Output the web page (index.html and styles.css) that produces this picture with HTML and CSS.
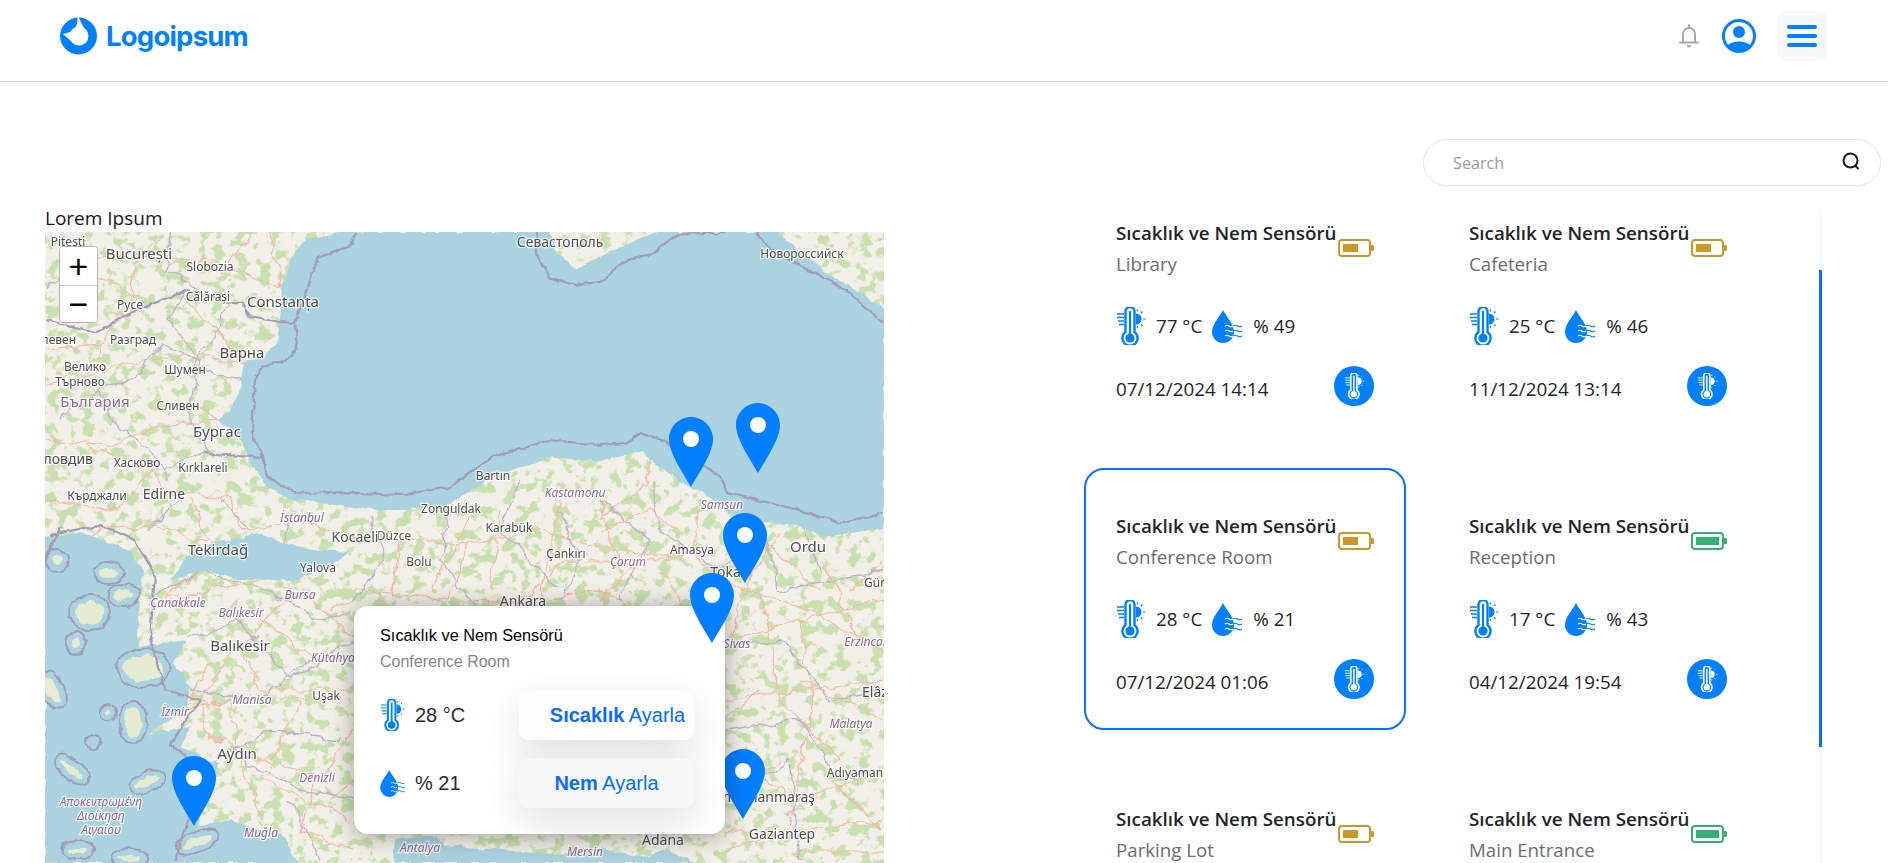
FILE: index.html
```html
<!DOCTYPE html>
<html lang="tr">
<head>
  <meta charset="UTF-8">
  <meta name="viewport" content="width=device-width, initial-scale=1.0">
  <title>Logoipsum</title>
  <link rel="stylesheet" href="styles.css">
</head>
<body>
  <svg class="sprite" width="0" height="0">
    <symbol id="thermo" viewBox="0 0 30 38">
      <path d="M9.500 25V4.500a4.500 4.500 0 0 1 9 0V25a7.600 7.600 0 1 1-9 0Z" fill="none" stroke="currentColor" stroke-width="2.400"/>
      <circle cx="14" cy="31" r="4.600" fill="currentColor"/>
      <path d="M14 4v24" stroke="currentColor" stroke-width="2.200"/>
      <path d="M1 7h7M1 10.500h7M2 14h6M3 17.500h5" stroke="currentColor" stroke-width="1.300"/>
      <path d="M20 6.500a5.500 5.500 0 0 1 0 11Z" fill="currentColor"/>
      <path d="M21 2.500l.6 1.800M26.500 4.500l-1.500 1.500M29.500 12h-2.500M26.500 19l-1.500-1.500M21 21l.6-1.800" stroke="currentColor" stroke-width="1.200"/>
    </symbol>
    <symbol id="drop" viewBox="0 0 30 33">
      <path d="M11 0C14 6.500 22 14 22 22A11 11 0 0 1 0 22C0 14 8 6.500 11 0Z" fill="currentColor"/>
      <g fill="none" stroke-width="1.100">
        <path class="wave-in" d="M13 16q2-1.600 4 0t4 0M13 21q2-1.600 4 0t4 0M13 26q2-1.600 4 0t4 0"/>
        <path d="M21 16q2-1.600 4.500 0t4.500 0M21 21q2-1.600 4.500 0t4.500 0M21 26q2-1.600 4.500 0t4.500 0" stroke="currentColor"/>
      </g>
    </symbol>
    <symbol id="pin" viewBox="0 0 44 70">
      <path d="M22 0C34 0 44 10 44 22C44 36 30 56 22 70C14 56 0 36 0 22C0 10 10 0 22 0Z" fill="#007fff"/>
      <circle cx="22" cy="22" r="8" fill="#fff"/>
    </symbol>
    <symbol id="battery" viewBox="0 0 36 18">
      <rect x="1" y="1" width="31" height="16" rx="3" fill="none" stroke="currentColor" stroke-width="2"/>
      <path d="M33 6h1.500a1.500 1.500 0 0 1 1.500 1.500v3a1.500 1.500 0 0 1-1.500 1.500H33Z" fill="currentColor"/>
    </symbol>
  </svg>

  <header class="topbar">
    <a class="logo" href="#">
      <svg class="logo-mark" viewBox="0 0 37 38">
        <circle cx="18.500" cy="19" r="18.500" fill="#007fff"/>
        <circle cx="19" cy="19" r="9.500" fill="#fff"/>
        <path d="M17.500 0C18 9 15 15 3 17L12 25L25 13L18.500 0Z" fill="#fff"/>
      </svg>
      <span class="logo-text">Logoipsum</span>
    </a>
    <div class="topbar-actions">
      <svg class="bell" viewBox="0 0 20 24">
        <path d="M10 1v2M4 18V10a6 6 0 0 1 12 0v8M1 18.500h18" fill="none" stroke="#aaa" stroke-width="2" stroke-linecap="round"/>
        <path d="M8 21.500h4l-2 1.800Z" fill="#aaa" stroke="#aaa"/>
      </svg>
      <svg class="user" viewBox="0 0 34 34">
        <circle cx="17" cy="17" r="15.500" fill="#fff" stroke="#007fff" stroke-width="3"/>
        <circle cx="17" cy="13" r="6" fill="#007fff"/>
        <path d="M5 27C10 21 24 21 29 27C25 34 9 34 5 27Z" fill="#007fff"/>
      </svg>
      <button class="menu-btn" aria-label="Menu"><span></span><span></span><span></span></button>
    </div>
  </header>

  <main class="page">
    <section class="map-col">
      <h2 class="map-title">Lorem Ipsum</h2>
      <div class="map">
        <svg class="map-tiles" viewBox="45 232 839 631">
          <defs>
            <filter id="greens" x="0" y="0" width="100%" height="100%" color-interpolation-filters="sRGB">
              <feTurbulence type="fractalNoise" baseFrequency="0.085" numOctaves="4" seed="11"/>
              <feColorMatrix type="matrix" values="0 0 0 0 0.79  0 0 0 0 0.88  0 0 0 0 0.69  9 0 0 0 -4.700"/>
            </filter>
            <filter id="wiggle" filterUnits="userSpaceOnUse" x="0" y="190" width="930" height="720">
              <feTurbulence type="fractalNoise" baseFrequency="0.05" numOctaves="3" seed="4" result="n"/>
              <feDisplacementMap in="SourceGraphic" in2="n" scale="14" xChannelSelector="R" yChannelSelector="G"/>
            </filter>
            <filter id="wiggle-fine" filterUnits="userSpaceOnUse" x="0" y="190" width="930" height="720">
              <feTurbulence type="fractalNoise" baseFrequency="0.09" numOctaves="3" seed="7" result="n"/>
              <feDisplacementMap in="SourceGraphic" in2="n" scale="6" xChannelSelector="R" yChannelSelector="G"/>
            </filter>
            <g id="isles">
              <ellipse cx="108" cy="573" rx="9" ry="5"/>
              <ellipse cx="123" cy="595" rx="10" ry="5"/>
              <ellipse cx="90" cy="613" rx="14" ry="12"/>
              <ellipse cx="76" cy="643" rx="4" ry="6"/>
              <ellipse cx="143" cy="668" rx="21" ry="13"/>
              <ellipse cx="133" cy="722" rx="8" ry="15"/>
              <ellipse cx="108" cy="712" rx="2" ry="2"/>
              <ellipse cx="93" cy="742" rx="1" ry="1"/>
              <ellipse cx="57" cy="560" rx="6" ry="5"/>
              <ellipse cx="72" cy="770" rx="14" ry="4" transform="rotate(40 72 770)"/>
              <ellipse cx="147" cy="782" rx="13" ry="4" transform="rotate(-25 147 782)"/>
              <ellipse cx="197" cy="842" rx="16" ry="4" transform="rotate(-20 197 842)"/>
              <ellipse cx="52" cy="690" rx="6" ry="14" transform="rotate(-30 52 690)"/>
              <ellipse cx="78" cy="850" rx="10" ry="3"/>
              <ellipse cx="130" cy="858" rx="12" ry="3"/>
            </g>
          </defs>

          <rect x="45" y="232" width="839" height="631" fill="#f2efe8"/>
          <rect x="45" y="232" width="839" height="631" filter="url(#greens)"/>

          <g class="roads" filter="url(#wiggle)">
            <path d="M45 440L110 445L170 425L217 420M160 240L139 254L210 262L282 288M139 254L130 304M130 304L100 345L95 370L45 385M100 370L180 355L243 363"/>
            <path d="M85 445L150 470L167 490L230 500L240 530L300 520L355 537L425 540L470 545L530 530L590 545L640 555L692 555L745 590L810 610L884 650"/>
            <path d="M218 545L165 600L215 590L265 580L300 590L354 640M240 646L300 590M240 646L200 700L205 730L240 755L320 775L354 730M237 754L230 700L175 712M162 700L200 705"/>
            <path d="M725 640L800 620L884 600M725 700L884 680M725 760L800 800L884 770M725 830L780 835L884 820M800 620L810 700L790 830M760 590L780 700L840 760"/>
            <path d="M354 590L450 600L523 601L566 560L628 562L692 555M500 510L490 590M600 500L620 560M650 460L640 490L600 520M700 500L692 555M780 530L745 590L730 640"/>
            <path d="M240 755L262 820M320 775L300 830M240 646L262 690L330 690M45 540L150 525L218 545M190 500L210 540M140 254L60 262"/>
            <path d="M400 540L394 600M470 545L450 600M540 600L560 500M640 560L600 600M820 560L860 640L884 640M725 720L760 690M760 840L725 850"/>
            <path d="M70 270L120 285L130 304M230 262L250 232M282 288L270 232M185 300L215 330L243 363M45 350L100 345M190 400L217 420M150 470L120 510L45 500"/>
            <path d="M330 610L354 600M260 620L320 660L354 660M280 700L354 690M262 780L354 820M300 830L354 850M210 660L190 700M330 800L354 780M270 760L300 700"/>
            <path d="M430 590L470 520M550 600L600 590L640 610L725 600M660 570L680 600L725 620M600 530L650 510L680 530M760 540L820 590M850 590L884 560M800 680L884 720M725 790L780 760M830 780L884 830M800 850L884 850"/>
          </g>

          <g class="borders" filter="url(#wiggle)">
            <path d="M60 232L70 270L45 290M170 232L165 270L200 290M187 290L170 320L200 360L160 345L130 380L100 390L120 430M230 303L210 340L190 365L245 380M100 390L60 420M200 360L190 410L205 452"/>
            <path d="M120 430L150 450L170 480M205 452L160 470M180 500L150 530M220 500L250 530M290 520L280 560"/>
            <path d="M150 600L200 570L260 590L320 620L354 610M190 640L240 620L290 680L354 640M190 690L260 700L310 660M215 760L270 730L340 740M245 760L300 790L354 800M290 800L320 860"/>
            <path d="M370 510L385 560L354 600M450 500L440 560L480 610M520 480L500 530L560 590M560 510L580 560L560 600M600 500L650 540L620 600M650 480L660 530L720 570L760 530M760 530L780 590L884 570"/>
            <path d="M725 650L780 640L830 700L884 690M725 730L800 720L840 780L884 770M800 520L820 570M740 790L790 760L800 860"/>
          </g>

          <g filter="url(#wiggle-fine)">
            <path class="sea" d="M340 232L540 232L550 232L557 253L575 270L600 257L623 245L643 237L657 232L778 232L800 253L833 277L867 297L884 310L884 528L823 537L800 525L763 522L727 513L710 497L683 483L650 460L643 450L600 462L550 457L493 477L450 503L410 510L370 510L330 503L293 500L267 487L250 463L240 437L230 430L217 420L230 410L240 393L243 363L263 357L278 343L280 320L282 287L287 273L293 253L307 240Z"/>
            <path class="sea" d="M45 537L80 533L130 550L143 570L140 600L137 647L187 640L173 663L190 687L187 707L150 733L190 727L180 747L217 763L210 793L197 827L230 820L263 830L283 833L297 863L45 863Z"/>
            <path class="sea" d="M230 540L257 533L290 545L320 550L350 552L330 567L297 580L263 580L237 580L207 570L170 580L187 557L217 540Z"/>
            <path class="sea" d="M393 863L395 838L430 836L445 845L500 850L560 855L600 848L640 858L665 850L695 863Z"/>

            <g class="border-ring"><use href="#isles"/></g>
            <g class="border-gap"><use href="#isles"/></g>
            <g class="isle-land"><use href="#isles"/></g>

            <g class="country">
              <path d="M45 320L97 332L130 313L187 290L230 303L243 303L250 317L280 322L295 323"/>
              <path d="M357 232L350 247L317 258L295 323L297 337L293 357L263 367L255 380L252 433L263 457L267 477L297 493L340 492L400 495L450 487L493 457L550 440L600 445L627 443L640 433L667 443L697 460L720 477L727 493L770 503L810 513L840 523L884 512"/>
              <path d="M203 453L263 458"/>
              <path d="M536 232L536 253L550 277L573 286L600 283L623 262L653 253L670 240L683 234L730 232"/>
              <path d="M757 232L770 250L810 270L850 293L884 323"/>
              <path d="M60 528L45 560M50 535L100 525L135 540L155 575L150 640L165 690L200 700L170 745L205 770L190 815L175 860"/>
            </g>
          </g>

          <g class="labels">
            <text x="68" y="246" class="sm">Pitești</text>
            <text x="139" y="259" class="xl">București</text>
            <text x="210" y="271" class="sm">Slobozia</text>
            <text x="208" y="301" class="sm">Călărași</text>
            <text x="130" y="309" class="sm">Pyce</text>
            <text x="283" y="307" class="xl">Constanța</text>
            <text x="133" y="344" class="sm">Разград</text>
            <text x="76" y="344" class="sm end">Плевен</text>
            <text x="242" y="358" class="lg">Варна</text>
            <text x="85" y="371" class="sm">Велико</text>
            <text x="80" y="386" class="sm">Търново</text>
            <text x="185" y="374" class="sm">Шумен</text>
            <text x="95" y="407" class="region big">България</text>
            <text x="178" y="410" class="sm">Сливен</text>
            <text x="217" y="437" class="lg">Бургас</text>
            <text x="93" y="464" class="md end">Пловдив</text>
            <text x="137" y="467" class="sm">Хасково</text>
            <text x="203" y="472" class="sm">Kırklareli</text>
            <text x="97" y="500" class="sm">Кърджали</text>
            <text x="164" y="499" class="md">Edirne</text>
            <text x="560" y="247" class="md">Севастополь</text>
            <text x="802" y="258" class="sm">Новороссийск</text>
            <text x="493" y="480" class="sm">Bartın</text>
            <text x="451" y="513" class="sm">Zonguldak</text>
            <text x="575" y="497" class="region">Kastamonu</text>
            <text x="722" y="509" class="region">Samsun</text>
            <text x="509" y="532" class="sm">Karabük</text>
            <text x="566" y="558" class="sm">Çankırı</text>
            <text x="628" y="566" class="region">Çorum</text>
            <text x="692" y="554" class="sm">Amasya</text>
            <text x="728" y="577" class="md">Tokat</text>
            <text x="808" y="552" class="lg">Ordu</text>
            <text x="864" y="587" class="sm start">Gümüşhane</text>
            <text x="419" y="566" class="sm">Bolu</text>
            <text x="394" y="540" class="sm">Düzce</text>
            <text x="523" y="606" class="md">Ankara</text>
            <text x="355" y="542" class="md">Kocaeli</text>
            <text x="218" y="555" class="lg">Tekirdağ</text>
            <text x="302" y="522" class="region">İstanbul</text>
            <text x="318" y="572" class="sm">Yalova</text>
            <text x="300" y="599" class="region">Bursa</text>
            <text x="178" y="607" class="region">Çanakkale</text>
            <text x="241" y="617" class="region">Balıkesir</text>
            <text x="240" y="651" class="lg">Balıkesir</text>
            <text x="333" y="662" class="region">Kütahya</text>
            <text x="252" y="704" class="region">Manisa</text>
            <text x="326" y="700" class="sm">Uşak</text>
            <text x="175" y="716" class="region">İzmir</text>
            <text x="237" y="759" class="lg">Aydın</text>
            <text x="317" y="782" class="region">Denizli</text>
            <text x="261" y="837" class="region">Muğla</text>
            <text x="101" y="806" class="region">Αποκεντρωμένη</text>
            <text x="101" y="820" class="region">Διοίκηση</text>
            <text x="101" y="834" class="region">Αιγαίου</text>
            <text x="420" y="852" class="region">Antalya</text>
            <text x="585" y="856" class="region">Mersin</text>
            <text x="663" y="845" class="md">Adana</text>
            <text x="782" y="839" class="md">Gaziantep</text>
            <text x="815" y="802" class="md end">Kahramanmaraş</text>
            <text x="855" y="777" class="sm">Adıyaman</text>
            <text x="851" y="728" class="region">Malatya</text>
            <text x="862" y="697" class="md start">Elâzığ</text>
            <text x="737" y="648" class="region">Sivas</text>
            <text x="867" y="646" class="region">Erzincan</text>
          </g>
        </svg>

        <div class="zoom-ctl">
          <button class="zoom-btn">+</button>
          <button class="zoom-btn">−</button>
        </div>

        <svg class="pin pin-a"><use href="#pin"/></svg>
        <svg class="pin pin-b"><use href="#pin"/></svg>
        <svg class="pin pin-c"><use href="#pin"/></svg>
        <svg class="pin pin-e"><use href="#pin"/></svg>
        <svg class="pin pin-f"><use href="#pin"/></svg>

        <div class="popup">
          <div class="popup-title">Sıcaklık ve Nem Sensörü</div>
          <div class="popup-place">Conference Room</div>
          <div class="popup-row">
            <div class="popup-val">
              <svg class="popup-thermo"><use href="#thermo"/></svg>
              <span>28 °C</span>
            </div>
            <button class="popup-btn popup-btn-temp"><b>Sıcaklık</b> Ayarla</button>
          </div>
          <div class="popup-row">
            <div class="popup-val">
              <svg class="popup-drop"><use href="#drop"/></svg>
              <span>% 21</span>
            </div>
            <button class="popup-btn popup-btn-hum"><b>Nem</b> Ayarla</button>
          </div>
        </div>

        <svg class="pin pin-d"><use href="#pin"/></svg>
      </div>
    </section>

    <section class="side-col">
      <div class="search">
        <input class="search-input" type="text" placeholder="Search">
        <svg class="search-icon" viewBox="0 0 20 20">
          <circle cx="9.500" cy="9.500" r="7" fill="none" stroke="#1c1c1c" stroke-width="2"/>
          <path d="M14.500 15l2.500 2.500" stroke="#1c1c1c" stroke-width="2" stroke-linecap="round"/>
        </svg>
      </div>

      <div class="sensor-panel">
        <div class="scroll-track"><div class="scroll-thumb"></div></div>
        <div class="sensor-grid">

          <article class="card">
            <div class="card-head">
              <div>
                <div class="card-title">Sıcaklık ve Nem Sensörü</div>
                <div class="card-place">Library</div>
              </div>
              <div class="batt batt-mid"><svg><use href="#battery"/></svg><i></i></div>
            </div>
            <div class="card-stats">
              <svg class="ic-thermo"><use href="#thermo"/></svg><span>77 °C</span>
              <svg class="ic-drop"><use href="#drop"/></svg><span>% 49</span>
            </div>
            <div class="card-foot">
              <span class="card-date">07/12/2024 14:14</span>
              <button class="round-btn"><svg><use href="#thermo"/></svg></button>
            </div>
          </article>

          <article class="card">
            <div class="card-head">
              <div>
                <div class="card-title">Sıcaklık ve Nem Sensörü</div>
                <div class="card-place">Cafeteria</div>
              </div>
              <div class="batt batt-mid"><svg><use href="#battery"/></svg><i></i></div>
            </div>
            <div class="card-stats">
              <svg class="ic-thermo"><use href="#thermo"/></svg><span>25 °C</span>
              <svg class="ic-drop"><use href="#drop"/></svg><span>% 46</span>
            </div>
            <div class="card-foot">
              <span class="card-date">11/12/2024 13:14</span>
              <button class="round-btn"><svg><use href="#thermo"/></svg></button>
            </div>
          </article>

          <article class="card card-active">
            <div class="card-head">
              <div>
                <div class="card-title">Sıcaklık ve Nem Sensörü</div>
                <div class="card-place">Conference Room</div>
              </div>
              <div class="batt batt-mid"><svg><use href="#battery"/></svg><i></i></div>
            </div>
            <div class="card-stats">
              <svg class="ic-thermo"><use href="#thermo"/></svg><span>28 °C</span>
              <svg class="ic-drop"><use href="#drop"/></svg><span>% 21</span>
            </div>
            <div class="card-foot">
              <span class="card-date">07/12/2024 01:06</span>
              <button class="round-btn"><svg><use href="#thermo"/></svg></button>
            </div>
          </article>

          <article class="card">
            <div class="card-head">
              <div>
                <div class="card-title">Sıcaklık ve Nem Sensörü</div>
                <div class="card-place">Reception</div>
              </div>
              <div class="batt batt-full"><svg><use href="#battery"/></svg><i></i></div>
            </div>
            <div class="card-stats">
              <svg class="ic-thermo"><use href="#thermo"/></svg><span>17 °C</span>
              <svg class="ic-drop"><use href="#drop"/></svg><span>% 43</span>
            </div>
            <div class="card-foot">
              <span class="card-date">04/12/2024 19:54</span>
              <button class="round-btn"><svg><use href="#thermo"/></svg></button>
            </div>
          </article>

          <article class="card">
            <div class="card-head">
              <div>
                <div class="card-title">Sıcaklık ve Nem Sensörü</div>
                <div class="card-place">Parking Lot</div>
              </div>
              <div class="batt batt-mid"><svg><use href="#battery"/></svg><i></i></div>
            </div>
          </article>

          <article class="card">
            <div class="card-head">
              <div>
                <div class="card-title">Sıcaklık ve Nem Sensörü</div>
                <div class="card-place">Main Entrance</div>
              </div>
              <div class="batt batt-full"><svg><use href="#battery"/></svg><i></i></div>
            </div>
          </article>

        </div>
      </div>
    </section>
  </main>
</body>
</html>
```

FILE: styles.css
```css
* {
  box-sizing: border-box;
}
html, body {
  height: 100%;
  margin: 0;
  overflow: hidden;
}
body {
  background: #fff;
  color: #212529;
  font-family: "Open Sans", "Noto Sans", sans-serif;
}
.sprite {
  position: absolute;
}
.wave-in {
  stroke: #fff;
}

/* header */
.topbar {
  height: 82px;
  border-bottom: 1px solid #e0e0e0;
  display: flex;
  align-items: flex-start;
  justify-content: space-between;
  padding: 11px 61px 0 60px;
}
.logo {
  display: flex;
  align-items: center;
  gap: 9px;
  margin-top: 6px;
  text-decoration: none;
}
.logo-mark {
  width: 37px;
  height: 38px;
}
.logo-text {
  color: #007fff;
  font-family: Inter, sans-serif;
  font-size: 27.500px;
  font-weight: 700;
  letter-spacing: -0.8px;
}
.topbar-actions {
  display: flex;
  align-items: center;
  gap: 21px;
}
.bell {
  width: 20px;
  height: 24px;
  margin-right: 2px;
}
.user {
  width: 34px;
  height: 34px;
}
.menu-btn {
  width: 50px;
  height: 50px;
  border: 0;
  border-radius: 8px;
  background: #f6f8fa;
  display: flex;
  flex-direction: column;
  align-items: center;
  justify-content: center;
  gap: 5.500px;
  padding: 0;
}
.menu-btn span {
  width: 30px;
  height: 3.500px;
  border-radius: 2px;
  background: #007fff;
}

/* layout */
.page {
  display: flex;
  justify-content: space-between;
  padding: 0 7px 0 45px;
}
.map-col {
  width: 839px;
  padding-top: 124px;
}
.map-title {
  margin: 0;
  height: 26px;
  line-height: 24px;
  font-size: 19px;
  font-weight: 500;
  color: #16181b;
}
.side-col {
  width: 797px;
  padding-top: 57px;
}

/* map */
.map {
  position: relative;
  width: 839px;
  height: 631px;
  overflow: hidden;
  background: #f2efe8;
}
.map-tiles {
  display: block;
  width: 839px;
  height: 631px;
  filter: blur(0.45px);
}
.roads path {
  fill: none;
  stroke: #f5b8a4;
  stroke-width: 1.200;
}
.borders path {
  fill: none;
  stroke: #bdb3c9;
  stroke-width: 1.300;
}
.sea {
  fill: #aad3df;
}
.country path {
  fill: none;
  stroke: #a49cb8;
  stroke-width: 2.200;
}
.border-ring {
  fill: #a49cb8;
  stroke: #a49cb8;
  stroke-width: 14;
}
.border-gap {
  fill: #aad3df;
  stroke: #aad3df;
  stroke-width: 10;
}
.isle-land {
  fill: #e6ecd2;
}
.labels text {
  font-family: "Noto Sans", sans-serif;
  text-anchor: middle;
  fill: #4f4f4f;
  stroke: rgba(255, 255, 255, 0.75);
  stroke-width: 2.500px;
  paint-order: stroke;
}
.labels .sm {
  font-size: 12px;
}
.labels .md {
  font-size: 14px;
}
.labels .lg {
  font-size: 15px;
}
.labels .xl {
  font-size: 15px;
}
.labels .end {
  text-anchor: end;
}
.labels .start {
  text-anchor: start;
}
.labels .region {
  font-size: 12px;
  font-style: italic;
  fill: #8a6d94;
}
.labels .big {
  font-size: 15px;
  font-style: normal;
}

.zoom-ctl {
  position: absolute;
  left: 14px;
  top: 14px;
  width: 39px;
  height: 77px;
  border-radius: 4px;
  border: 1px solid #b5b5b5;
  background: #fff;
  overflow: hidden;
}
.zoom-btn {
  display: block;
  width: 100%;
  height: 37.500px;
  padding: 0;
  border: 0;
  background: #fff;
  color: #000;
  font-family: "Liberation Sans", sans-serif;
  font-size: 34px;
  line-height: 36px;
}
.zoom-btn + .zoom-btn {
  border-top: 1px solid #ccc;
}

.pin {
  position: absolute;
  width: 44px;
  height: 70px;
}
.pin-a { left: 624px; top: 185px; }
.pin-b { left: 691px; top: 171px; }
.pin-c { left: 678px; top: 281px; }
.pin-d { left: 645px; top: 341px; }
.pin-e { left: 127px; top: 524px; }
.pin-f { left: 676px; top: 517px; }

/* popup on the map */
.popup {
  position: absolute;
  left: 309px;
  top: 374px;
  width: 371px;
  height: 228px;
  background: #fff;
  border-radius: 14px;
  box-shadow: 0 2px 24px rgba(0, 0, 0, 0.35);
  padding: 18px 31px 0 26px;
  font-family: "Liberation Sans", sans-serif;
}
.popup-title {
  height: 26px;
  line-height: 22px;
  font-size: 16.300px;
  color: #000;
}
.popup-place {
  height: 40px;
  line-height: 24px;
  font-size: 16px;
  color: #86868b;
}
.popup-row {
  display: flex;
  align-items: center;
  justify-content: space-between;
  height: 50px;
  margin-bottom: 18px;
}
.popup-val {
  display: flex;
  align-items: center;
  gap: 10px;
  font-size: 20px;
  color: #2b2b2b;
}
.popup-thermo {
  width: 25px;
  height: 32px;
  color: #007fff;
}
.popup-drop {
  width: 25px;
  height: 27px;
  color: #007fff;
}
.popup-btn {
  width: 175px;
  height: 50px;
  border: 0;
  border-radius: 9px;
  color: #0a6cff;
  font-family: "Liberation Sans", sans-serif;
  font-size: 20px;
  box-shadow: 0 14px 40px rgba(0, 0, 0, 0.12);
  white-space: nowrap;
}
.popup-btn-temp {
  background: #fdfdfd;
  padding: 0 0 0 22px;
}
.popup-btn-hum {
  background: #f8f8f8;
  padding: 0;
}

/* search */
.search {
  position: relative;
  width: 458px;
  height: 47px;
  margin-left: auto;
}
.search-input {
  width: 100%;
  height: 100%;
  border: 1.500px solid #e1e1e1;
  border-radius: 24px;
  padding: 0 60px 0 29px;
  font-family: "Open Sans", sans-serif;
  font-size: 16.200px;
  outline: none;
}
.search-input::placeholder {
  color: #9a9aa2;
}
.search-icon {
  position: absolute;
  right: 20px;
  top: 12px;
  width: 20px;
  height: 20px;
}

/* sensor cards */
.sensor-panel {
  position: relative;
  width: 738px;
  height: 650px;
  margin-top: 27px;
  overflow: hidden;
}
.scroll-track {
  position: absolute;
  right: 0;
  top: 0;
  width: 3px;
  height: 100%;
  background: #eff7ff;
}
.scroll-thumb {
  margin-top: 57px;
  height: 477px;
  background: #0d6efd;
}
.sensor-grid {
  display: grid;
  grid-template-columns: 322px 322px;
  grid-auto-rows: 262px;
  gap: 31px;
  margin-top: -38px;
}
.card {
  border: 2px solid transparent;
  border-radius: 20px;
  padding: 44px 30px 0;
}
.card-active {
  border-color: #0d6efd;
}
.card-head {
  display: flex;
  justify-content: space-between;
}
.card-title {
  height: 31px;
  line-height: 24px;
  font-size: 18.800px;
  font-weight: 600;
  white-space: nowrap;
  color: #212529;
}
.card-place {
  line-height: 24px;
  font-size: 18.700px;
  color: #6c6c75;
}
.batt {
  position: relative;
  width: 36px;
  height: 18px;
  margin-top: 18px;
  flex: none;
}
.batt svg {
  display: block;
  width: 36px;
  height: 18px;
}
.batt i {
  position: absolute;
  left: 5px;
  top: 5px;
  height: 8px;
}
.batt-mid {
  color: #c9972b;
}
.batt-mid i {
  width: 15px;
  background: #c9972b;
}
.batt-full {
  color: #37ae72;
}
.batt-full i {
  width: 23px;
  background: #37ae72;
}
.card-stats {
  display: flex;
  align-items: center;
  margin-top: 31px;
  height: 38px;
  font-size: 18.800px;
}
.ic-thermo {
  width: 30px;
  height: 38px;
  margin-right: 10px;
  color: #007fff;
}
.ic-drop {
  width: 30px;
  height: 33px;
  margin: 0 11px 0 10px;
  color: #007fff;
}
.card-foot {
  display: flex;
  align-items: center;
  justify-content: space-between;
  margin-top: 21px;
}
.card-date {
  padding-top: 6px;
  font-size: 18.800px;
}
.round-btn {
  width: 40px;
  height: 40px;
  padding: 0;
  border: 0;
  border-radius: 50%;
  background: #007fff;
  color: #fff;
  display: flex;
  align-items: center;
  justify-content: center;
  flex: none;
}
.round-btn svg {
  width: 21px;
  height: 26px;
}
.round-btn .wave-in {
  stroke: #007fff;
}
```
